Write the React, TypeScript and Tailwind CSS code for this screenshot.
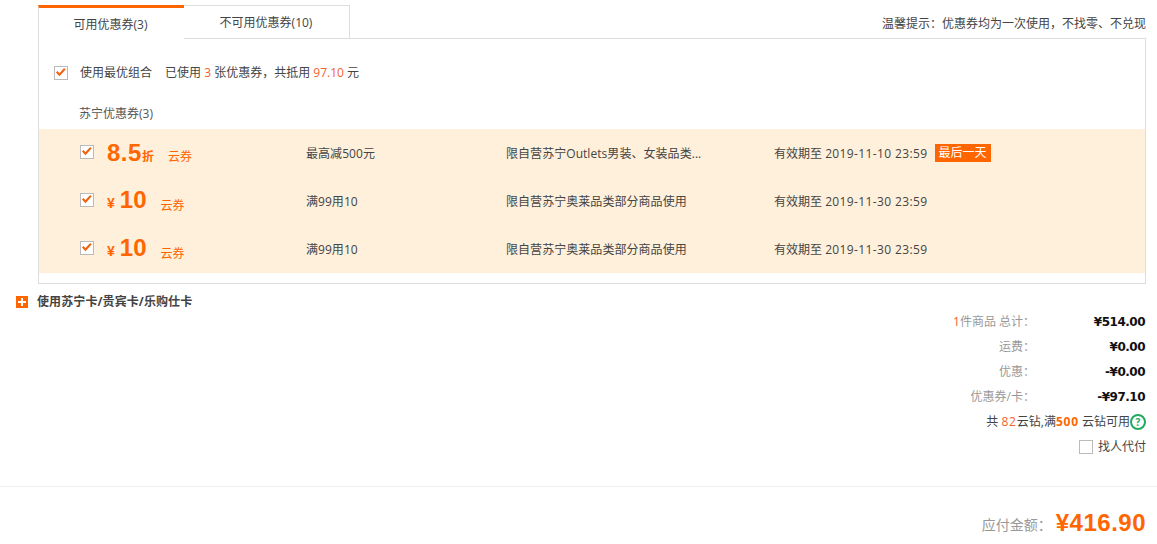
import React from "react";

const yahei = "font-['Open_Sans','Noto_Sans_CJK_SC',sans-serif]";
const arial = "font-['Liberation_Sans','Noto_Sans_CJK_SC',sans-serif]";
const verdana = "font-['DejaVu_Sans','Noto_Sans_CJK_SC',sans-serif]";

function Check({ checked = true }: { checked?: boolean }) {
  return (
    <span className="relative block w-[14px] h-[14px] border border-[#bbbbbb] bg-white shrink-0">
      {checked && (
        <svg viewBox="0 0 14 14" className="absolute left-0 top-0 w-[12px] h-[12px]" fill="none">
          <path d="M2 5.5 L5.2 9 L11.5 2" stroke="#f2610f" strokeWidth="2.4" />
        </svg>
      )}
    </span>
  );
}

const coupons = [
  { limit: "最高减500元", scope: "限自营苏宁Outlets男装、女装品类...", date: "2019-11-10 23:59", discount: true, last: true },
  { limit: "满99用10", scope: "限自营苏宁奥莱品类部分商品使用", date: "2019-11-30 23:59" },
  { limit: "满99用10", scope: "限自营苏宁奥莱品类部分商品使用", date: "2019-11-30 23:59" },
];

function CouponRow({ c }: { c: (typeof coupons)[number] }) {
  return (
    <div className="flex items-center h-[48px] text-[12px] text-[#444444]">
      <div className="w-[41px] shrink-0" />
      <div className="mb-[2px]">
        <Check />
      </div>
      {c.discount ? (
        <div className={`flex items-baseline w-[212px] pl-[13px] text-[#ff6600] ${arial}`}>
          <span className="text-[24px] font-bold tracking-[0.5px] leading-none">8.5</span>
          <span className={`text-[12px] font-bold ${yahei}`}>折</span>
          <span className={`text-[12px] ml-[14px] ${yahei}`}>云券</span>
        </div>
      ) : (
        <div className={`flex items-baseline w-[212px] pl-[13px] text-[#ff6600] ${arial}`}>
          <span className="text-[14px] font-bold">¥</span>
          <span className="text-[24px] font-bold ml-[5px] leading-none">10</span>
          <span className={`text-[12px] ml-[14px] translate-y-[2px] ${yahei}`}>云券</span>
        </div>
      )}
      <div className={`w-[200px] pt-[2px] tracking-[0.05px] ${yahei}`}>{c.limit}</div>
      <div className={`w-[268px] pt-[2px] tracking-[0.05px] ${yahei}`}>{c.scope}</div>
      <div className={`flex items-center ${yahei}`}>
        <span className="pt-[2px]">
          有效期至 <span className="tracking-[0.38px]">{c.date}</span>
        </span>
        {c.last && (
          <span className="ml-[7px] h-[18px] w-[56px] bg-[#ff6600] text-white text-center leading-[18px] text-[12px]">
            最后一天
          </span>
        )}
      </div>
    </div>
  );
}

function SumRow({ label, value }: { label: React.ReactNode; value: string }) {
  return (
    <div className="flex justify-end items-center h-[25px] text-[12px]">
      <div className={`text-[#999999] text-right ${yahei}`}>{label}</div>
      <div className={`w-[111px] pr-[1px] text-right font-bold tracking-[-0.5px] text-[#111111] ${verdana}`}>{value}</div>
    </div>
  );
}

export default function App() {
  return (
    <div className={`w-[1157px] h-[544px] bg-white overflow-hidden ${yahei}`}>
      <div className="pl-[38px] pr-[11px] pt-[5px]">
        <div className="flex items-stretch h-[33px]">
          <div className="w-[146px] pr-[2px] border-t-[3px] border-[#ff6600] border-l border-l-[#dddddd] bg-white relative z-10 h-[34px] text-center text-[12px] text-[#444444] leading-[34px]">
            可用优惠券(3)
          </div>
          <div className="w-[166px] pr-[1px] border border-l-0 border-b-0 border-[#dddddd] text-center text-[12px] text-[#444444] leading-[33px]">
            不可用优惠券(10)
          </div>
          <div className="flex-1 text-right text-[12px] text-[#444444] leading-[38px] whitespace-nowrap">
            温馨提示：优惠券均为一次使用，不找零、不兑现
          </div>
        </div>
        <div className="border border-[#dddddd] h-[246px]">
          <div className="flex items-center h-[67px] pl-[15px] text-[12px] text-[#444444]">
            <Check />
            <span className="ml-[12px]">使用最优组合</span>
            <span className="ml-[13px]">
              已使用 <span className="text-[#f2622b]">3</span> 张优惠券，共抵用{" "}
              <span className="text-[#f2622b]">97.10</span> 元
            </span>
          </div>
          <div className="h-[23px] pl-[40px] text-[12px] leading-[16px] text-[#555555]">苏宁优惠券(3)</div>
          <div className="bg-[#fff0db]">
            {coupons.map((c, i) => (
              <CouponRow key={i} c={c} />
            ))}
          </div>
        </div>
      </div>

      <div className="flex items-center h-[17px] mt-[9px] pl-[16px]">
        <span className="relative w-[12px] h-[12px] bg-[#ff6600]">
          <span className="absolute left-[2px] top-[5px] w-[8px] h-[2px] bg-white" />
          <span className="absolute left-[5px] top-[2px] w-[2px] h-[8px] bg-white" />
        </span>
        <span className="ml-[9px] text-[12px] font-bold tracking-[0.1px] text-[#444444]">使用苏宁卡/贵宾卡/乐购仕卡</span>
      </div>

      <div className="pr-[11px] -mt-[1px]">
        <SumRow label={<><span className="text-[#f2622b]">1</span>件商品 总计：</>} value="¥514.00" />
        <SumRow label="运费：" value="¥0.00" />
        <SumRow label="优惠：" value="-¥0.00" />
        <SumRow label="优惠券/卡：" value="-¥97.10" />
        <div className="flex justify-end items-center h-[25px] text-[12px] text-[#444444]">
          <span>
            共 <span className="text-[#f2622b] tracking-[0.8px]">82</span>云钻,满
            <span className="font-bold text-[#ff6600] tracking-[0.8px]">500</span> 云钻可用
          </span>
          <span className="w-[16px] h-[16px] rounded-full border-2 border-[#22ab5f] text-[#22ab5f] text-[10px] font-bold leading-[12px] text-center">?</span>
        </div>
        <div className="flex justify-end items-center h-[25px] text-[12px] text-[#444444]">
          <Check checked={false} />
          <span className="ml-[5px]">找人代付</span>
        </div>
      </div>

      <div className="border-t border-[#eeeeee] mt-[27px] pr-[11px] flex justify-end items-center pt-[22px]">
        <span className="text-[14px] text-[#999999] mt-[3px]">应付金额：</span>
        <span className={`ml-[4px] text-[24px] leading-[28px] font-bold tracking-[0.5px] text-[#ff6600] ${arial}`}>¥416.90</span>
      </div>
    </div>
  );
}
